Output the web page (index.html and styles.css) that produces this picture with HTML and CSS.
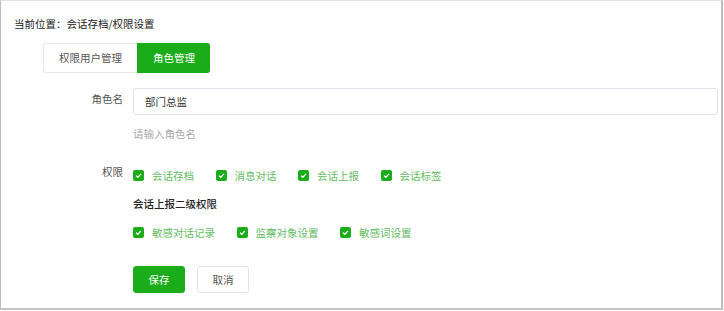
FILE: index.html
```html
<!DOCTYPE html>
<html lang="zh-CN">
<head>
<meta charset="utf-8">
<link rel="stylesheet" href="styles.css">
</head>
<body>
<div class="frame">
  <div class="crumb">当前位置：会话存档/权限设置</div>
  <div class="tabs">
    <div class="tab">权限用户管理</div>
    <div class="tab tab-active">角色管理</div>
  </div>
  <div class="form">
    <div class="row row-name">
      <div class="label label-name">角色名</div>
      <div class="field">
        <div class="input">部门总监</div>
        <div class="hint">请输入角色名</div>
      </div>
    </div>
    <div class="row row-perm">
      <div class="label label-perm">权限</div>
      <div class="field">
        <div class="checks">
          <span class="check"><span class="box"><svg viewBox="0 0 11 11" width="11" height="11"><path d="M3 5.6 L4.8 7.3 L8 3.9" fill="none" stroke="#fff" stroke-width="1.3"/></svg></span>会话存档</span>
          <span class="check"><span class="box"><svg viewBox="0 0 11 11" width="11" height="11"><path d="M3 5.6 L4.8 7.3 L8 3.9" fill="none" stroke="#fff" stroke-width="1.3"/></svg></span>消息对话</span>
          <span class="check"><span class="box"><svg viewBox="0 0 11 11" width="11" height="11"><path d="M3 5.6 L4.8 7.3 L8 3.9" fill="none" stroke="#fff" stroke-width="1.3"/></svg></span>会话上报</span>
          <span class="check"><span class="box"><svg viewBox="0 0 11 11" width="11" height="11"><path d="M3 5.6 L4.8 7.3 L8 3.9" fill="none" stroke="#fff" stroke-width="1.3"/></svg></span>会话标签</span>
        </div>
        <div class="sub-title">会话上报二级权限</div>
        <div class="checks checks-sub">
          <span class="check"><span class="box"><svg viewBox="0 0 11 11" width="11" height="11"><path d="M3 5.6 L4.8 7.3 L8 3.9" fill="none" stroke="#fff" stroke-width="1.3"/></svg></span>敏感对话记录</span>
          <span class="check"><span class="box"><svg viewBox="0 0 11 11" width="11" height="11"><path d="M3 5.6 L4.8 7.3 L8 3.9" fill="none" stroke="#fff" stroke-width="1.3"/></svg></span>监察对象设置</span>
          <span class="check"><span class="box"><svg viewBox="0 0 11 11" width="11" height="11"><path d="M3 5.6 L4.8 7.3 L8 3.9" fill="none" stroke="#fff" stroke-width="1.3"/></svg></span>敏感词设置</span>
        </div>
        <div class="actions">
          <div class="btn btn-primary">保存</div>
          <div class="btn btn-default">取消</div>
        </div>
      </div>
    </div>
  </div>
</div>
</body>
</html>
```
FILE: styles.css
```css
* { box-sizing: border-box; }
html, body { margin: 0; padding: 0; background: #fff; }
body {
  font-family: "Noto Sans CJK SC", "Noto Sans", sans-serif;
  font-size: 10.5px;
  line-height: 15px;
  color: #333;
}
.frame {
  width: 723px;
  height: 310px;
  border-left: 1px solid #bdbdbd;
  border-top: 1px solid #e2e2e2;
  border-right: 2px solid #bdbdbd;
  border-bottom: 2px solid #c4c4c4;
}
.crumb {
  margin: 15px 0 0 13px;
  color: #222;
}
.tabs {
  display: flex;
  margin: 12px 0 0 42px;
}
.tab {
  height: 30px;
  line-height: 28px;
  text-align: center;
  color: #555;
  border: 1px solid #e6e6e6;
  border-right: none;
  border-radius: 3px 0 0 3px;
  width: 94px;
  background: #fff;
}
.tab-active {
  width: 73px;
  background: #1aad19;
  border-color: #1aad19;
  color: #fff;
  border-radius: 0 3px 3px 0;
}
.form {
  margin: 15px 3px 0 42px;
}
.row {
  display: flex;
  gap: 10px;
}
.label {
  width: 80px;
  flex: none;
  text-align: right;
  color: #555;
}
.label-name { padding-top: 3px; }
.field { flex: 1; }
.input {
  height: 27px;
  border: 1px solid #e3e3ec;
  border-radius: 3px;
  padding-left: 11px;
  line-height: 25px;
  color: #333;
}
.hint {
  margin-top: 11px;
  color: #aaa;
}
.row-perm { margin-top: 22px; }
.label-perm { padding-top: 1px; }
.checks {
  display: flex;
  padding-top: 5px;
}
.check {
  display: flex;
  align-items: center;
  color: #62bb62;
  margin-right: 21.5px;
}
.box {
  width: 11px;
  height: 11px;
  border-radius: 2px;
  background: #1aad19;
  margin-right: 8px;
  display: flex;
}
.sub-title {
  margin-top: 13px;
  color: #222;
  font-weight: 500;
}
.checks-sub {
  padding-top: 0;
  margin-top: 14px;
}
.actions {
  display: flex;
  gap: 12px;
  margin-top: 26px;
}
.btn {
  width: 52px;
  height: 27px;
  border-radius: 3px;
  text-align: center;
  line-height: 25px;
}
.btn-primary {
  background: #1aad19;
  border: 1px solid #1aad19;
  color: #fff;
}
.btn-default {
  background: #fff;
  border: 1px solid #e3e3ea;
  color: #555;
}
```
